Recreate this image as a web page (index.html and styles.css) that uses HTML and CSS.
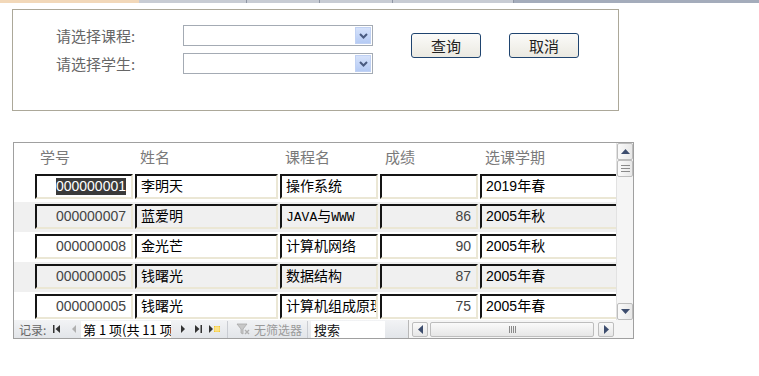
FILE: index.html
```html
<!DOCTYPE html>
<html lang="zh-CN">
<head>
<meta charset="utf-8">
<title>成绩查询</title>
<link rel="stylesheet" href="styles.css">
</head>
<body>
<div class="strip">
  <span class="s-orange"></span>
  <span class="s-tab t1"></span>
  <span class="s-tab t2"></span>
  <span class="s-tab t3"></span>
  <span class="s-tab t4"></span>
  <span class="s-dark"></span>
</div>

<div class="panel">
  <div class="form">
    <div class="frow">
      <span class="flabel">请选择课程:</span>
      <div class="combo"><span class="cbtn"><svg width="9" height="6" viewBox="0 0 9 6"><path d="M1 1 L4.5 4.5 L8 1" fill="none" stroke="#4a5b80" stroke-width="2"/></svg></span></div>
    </div>
    <div class="frow">
      <span class="flabel">请选择学生:</span>
      <div class="combo"><span class="cbtn"><svg width="9" height="6" viewBox="0 0 9 6"><path d="M1 1 L4.5 4.5 L8 1" fill="none" stroke="#4a5b80" stroke-width="2"/></svg></span></div>
    </div>
  </div>
  <div class="btns">
    <button class="btn">查询</button>
    <button class="btn">取消</button>
  </div>
</div>

<div class="grid">
  <div class="main">
    <div class="rows">
      <div class="hdr">
        <span class="w1">学号</span>
        <span class="w2">姓名</span>
        <span class="w3">课程名</span>
        <span class="w4">成绩</span>
        <span class="w5">选课学期</span>
      </div>
      <div class="row">
        <div class="cell w1 num"><span class="sel">000000001</span></div>
        <div class="cell w2">李明天</div>
        <div class="cell w3">操作系统</div>
        <div class="cell w4 num"></div>
        <div class="cell w5">2019年春</div>
      </div>
      <div class="row alt">
        <div class="cell w1 num">000000007</div>
        <div class="cell w2">蓝爱明</div>
        <div class="cell w3"><span class="mono">JAVA</span>与<span class="mono">WWW</span></div>
        <div class="cell w4 num">86</div>
        <div class="cell w5">2005年秋</div>
      </div>
      <div class="row">
        <div class="cell w1 num">000000008</div>
        <div class="cell w2">金光芒</div>
        <div class="cell w3">计算机网络</div>
        <div class="cell w4 num">90</div>
        <div class="cell w5">2005年秋</div>
      </div>
      <div class="row alt">
        <div class="cell w1 num">000000005</div>
        <div class="cell w2">钱曙光</div>
        <div class="cell w3">数据结构</div>
        <div class="cell w4 num">87</div>
        <div class="cell w5">2005年春</div>
      </div>
      <div class="row">
        <div class="cell w1 num">000000005</div>
        <div class="cell w2">钱曙光</div>
        <div class="cell w3">计算机组成原理</div>
        <div class="cell w4 num">75</div>
        <div class="cell w5">2005年春</div>
      </div>
    </div>
    <div class="vscroll">
      <span class="sbtn"><svg width="9" height="5" viewBox="0 0 9 5"><path d="M0 5 L4.5 0 L9 5 Z" fill="#3d4d6e"/></svg></span>
      <span class="sthumb"><svg width="9" height="7" viewBox="0 0 9 7"><path d="M0 0.5H9M0 3.5H9M0 6.5H9" stroke="#8a8a8a" stroke-width="1"/></svg></span>
      <span class="strack"></span>
      <span class="sbtn"><svg width="9" height="5" viewBox="0 0 9 5"><path d="M0 0 L4.5 5 L9 0 Z" fill="#3d4d6e"/></svg></span>
    </div>
  </div>
  <div class="nav">
    <span class="nlabel">记录:</span>
    <svg class="ic first" width="7" height="8" viewBox="0 0 7 8"><path d="M0 0H1.5V8H0Z M7 0 L2.5 4 L7 8Z" fill="#333"/></svg>
    <svg class="ic prev" width="4" height="8" viewBox="0 0 4 8"><path d="M4 0 L0 4 L4 8Z" fill="#b0b0b0"/></svg>
    <span class="recbox">第 1 项(共 11 项</span>
    <svg class="ic next" width="4" height="8" viewBox="0 0 4 8"><path d="M0 0 L4 4 L0 8Z" fill="#333"/></svg>
    <svg class="ic last" width="7" height="8" viewBox="0 0 7 8"><path d="M0 0 L4.5 4 L0 8Z M5.5 0H7V8H5.5Z" fill="#333"/></svg>
    <svg class="ic new" width="13" height="8" viewBox="0 0 13 8"><path d="M0 0 L4 4 L0 8Z" fill="#333"/><rect x="5" y="1" width="6" height="6" fill="#f3c530"/><path d="M5 3H11M5 5H11M7 1V7M9 1V7" stroke="#fff3b8" stroke-width="0.8"/></svg>
    <span class="nsep s1"></span>
    <svg class="ic filter" width="14" height="12" viewBox="0 0 14 12"><path d="M1 1 H11 L7 6 V11 L5 10 V6 Z" fill="#c8c8c8" stroke="#a8a8a8" stroke-width="0.8"/><path d="M9 7 L13 11 M13 7 L9 11" stroke="#b0b0b0" stroke-width="1.4"/></svg>
    <span class="nofilter">无筛选器</span>
    <span class="nsep s2"></span>
    <span class="search">搜索</span>
    <div class="hscroll">
      <span class="hbtn"><svg width="5" height="9" viewBox="0 0 5 9"><path d="M5 0 L0 4.5 L5 9Z" fill="#3d4d6e"/></svg></span>
      <span class="hthumb"><svg width="7" height="7" viewBox="0 0 7 7"><path d="M0.5 0V7M2.5 0V7M4.5 0V7M6.5 0V7" stroke="#8a8a8a" stroke-width="1"/></svg></span>
      <span class="htrack"></span>
      <span class="hbtn"><svg width="5" height="9" viewBox="0 0 5 9"><path d="M0 0 L5 4.5 L0 9Z" fill="#3d4d6e"/></svg></span>
    </div>
    <span class="corner"></span>
  </div>
</div>
</body>
</html>
```

FILE: styles.css
```css
* { box-sizing: border-box; }

body {
  margin: 0;
  background: #fff;
  font-family: "Liberation Sans", "Noto Sans CJK SC", sans-serif;
  color: #000;
}

/* top strip */
.strip { display: flex; height: 3px; }
.strip span { display: block; height: 100%; }
.s-orange { width: 139px; background: #f2d8b9; }
.s-tab { background: #c8ccd4; border-right: 1px solid #8f96a4; }
.t1 { width: 108px; }
.t2 { width: 73px; }
.t3 { width: 73px; }
.t4 { width: 121px; }
.s-dark { flex: 1; background: #a4acbb; }

/* query panel */
.panel {
  display: flex;
  width: 607px;
  height: 102px;
  margin: 6px 0 0 12px;
  border: 1px solid #aca899;
}
.form {
  display: flex;
  flex-direction: column;
  gap: 7px;
  padding: 15px 0 0 43px;
}
.frow { display: flex; align-items: center; height: 21px; }
.flabel {
  width: 127px;
  font-family: "Noto Sans CJK SC", sans-serif;
  font-size: 15px;
  color: #666;
}
.combo {
  width: 190px;
  height: 21px;
  border: 1px solid #a4abb4;
  display: flex;
  justify-content: flex-end;
  padding: 1px;
  background: #fff;
}
.cbtn {
  width: 16px;
  height: 100%;
  background: linear-gradient(#d6e2fb, #b5cbf4);
  border: 1px solid #c0d1f3;
  display: flex;
  align-items: center;
  justify-content: center;
}
.btns { display: flex; gap: 28px; padding: 23px 0 0 38px; }
.btn {
  width: 70px;
  height: 25px;
  border: 1px solid #1f446f;
  border-radius: 3px;
  background: linear-gradient(#fbfbf9, #ebe9e1);
  font-family: "Noto Sans CJK SC", sans-serif;
  font-size: 15px;
  color: #222;
  padding: 0;
  line-height: 21px;
}

/* data grid */
.grid {
  width: 621px;
  height: 197px;
  margin: 31px 0 0 13px;
  border: 1px solid #a0a0a0;
  display: flex;
  flex-direction: column;
}
.main { display: flex; height: 177px; }
.rows { flex: 1; overflow: hidden; }

.hdr {
  display: flex;
  height: 29px;
  align-items: center;
  padding: 0 0 3px 21px;
  gap: 2px;
  font-family: "Noto Sans CJK SC", sans-serif;
  font-size: 15px;
  color: #7a7a7a;
}
.hdr span { flex: none; padding-left: 5px; }

.row {
  display: flex;
  height: 30px;
  padding: 2px 0 0 21px;
  gap: 2px;
}
.row.alt { background: #f0f0f0; }

.cell {
  flex: none;
  height: 25px;
  border: 2px solid;
  border-color: #151515 #ebe7d5 #ebe7d5 #151515;
  font-size: 14px;
  line-height: 21px;
  padding: 0 4px;
  white-space: nowrap;
  overflow: hidden;
}
.w1 { width: 98px; }
.w2 { width: 143px; }
.w3 { width: 98px; }
.w4 { width: 98px; }
.w5 { width: 150px; }
.num { text-align: right; padding-right: 5px; color: #444; }
.sel { display: inline-block; background: #3a3a3a; color: #fff; line-height: 17px; }
.mono { font-family: "Liberation Mono", monospace; font-size: 13px; }

/* vertical scrollbar */
.vscroll {
  width: 17px;
  display: flex;
  flex-direction: column;
  background: #f5f5f5;
  border-left: 1px solid #e2e2e2;
}
.sbtn, .sthumb {
  height: 17px;
  flex: none;
  border: 1px solid #bdbdbd;
  border-radius: 2px;
  background: linear-gradient(90deg, #fafafa, #e8e8e8);
  display: flex;
  align-items: center;
  justify-content: center;
}
.strack { flex: 1; }

/* record navigation bar */
.nav {
  display: flex;
  align-items: center;
  height: 18px;
  background: linear-gradient(#f2f3f5, #e2e5e9);
  font-family: "Noto Sans CJK SC", sans-serif;
  font-size: 12px;
  color: #666;
}
.nlabel { width: 39px; padding-left: 5px; flex: none; }
.ic { flex: none; display: block; }
.prev { margin-left: 12px; }
.recbox {
  margin-left: 5px;
  width: 90px;
  height: 17px;
  background: #fff;
  color: #000;
  font-size: 13px;
  line-height: 17px;
  padding-left: 2px;
  white-space: nowrap;
  overflow: hidden;
  flex: none;
}
.next { margin-left: 10px; }
.last { margin-left: 10px; }
.new { margin-left: 7px; }
.nsep { width: 1px; height: 17px; background: #c9ccd2; flex: none; }
.nsep.s1 { margin-left: 5px; }
.filter { margin-left: 8px; }
.nofilter { margin-left: 4px; color: #9a9a9a; width: 53px; flex: none; }
.nsep.s2 { margin-left: 0; }
.search {
  margin-left: 3px;
  width: 74px;
  height: 17px;
  background: #fff;
  color: #111;
  font-size: 13px;
  line-height: 17px;
  padding-left: 3px;
  flex: none;
}
.hscroll {
  margin-left: 23px;
  width: 207px;
  height: 18px;
  display: flex;
  align-items: center;
  gap: 2px;
  padding: 0 1px 0 3px;
  border-left: 1px solid #b8b8b8;
  background: #f5f5f5;
  flex: none;
}
.hbtn, .hthumb {
  height: 15px;
  border: 1px solid #bdbdbd;
  border-radius: 2px;
  background: linear-gradient(#fafafa, #e6e6e6);
  display: flex;
  align-items: center;
  justify-content: center;
  flex: none;
}
.hbtn { width: 16px; }
.hthumb { width: 164px; }
.htrack { flex: 1; }
.corner { flex: 1; height: 18px; background: #f5f5f5; }
```
